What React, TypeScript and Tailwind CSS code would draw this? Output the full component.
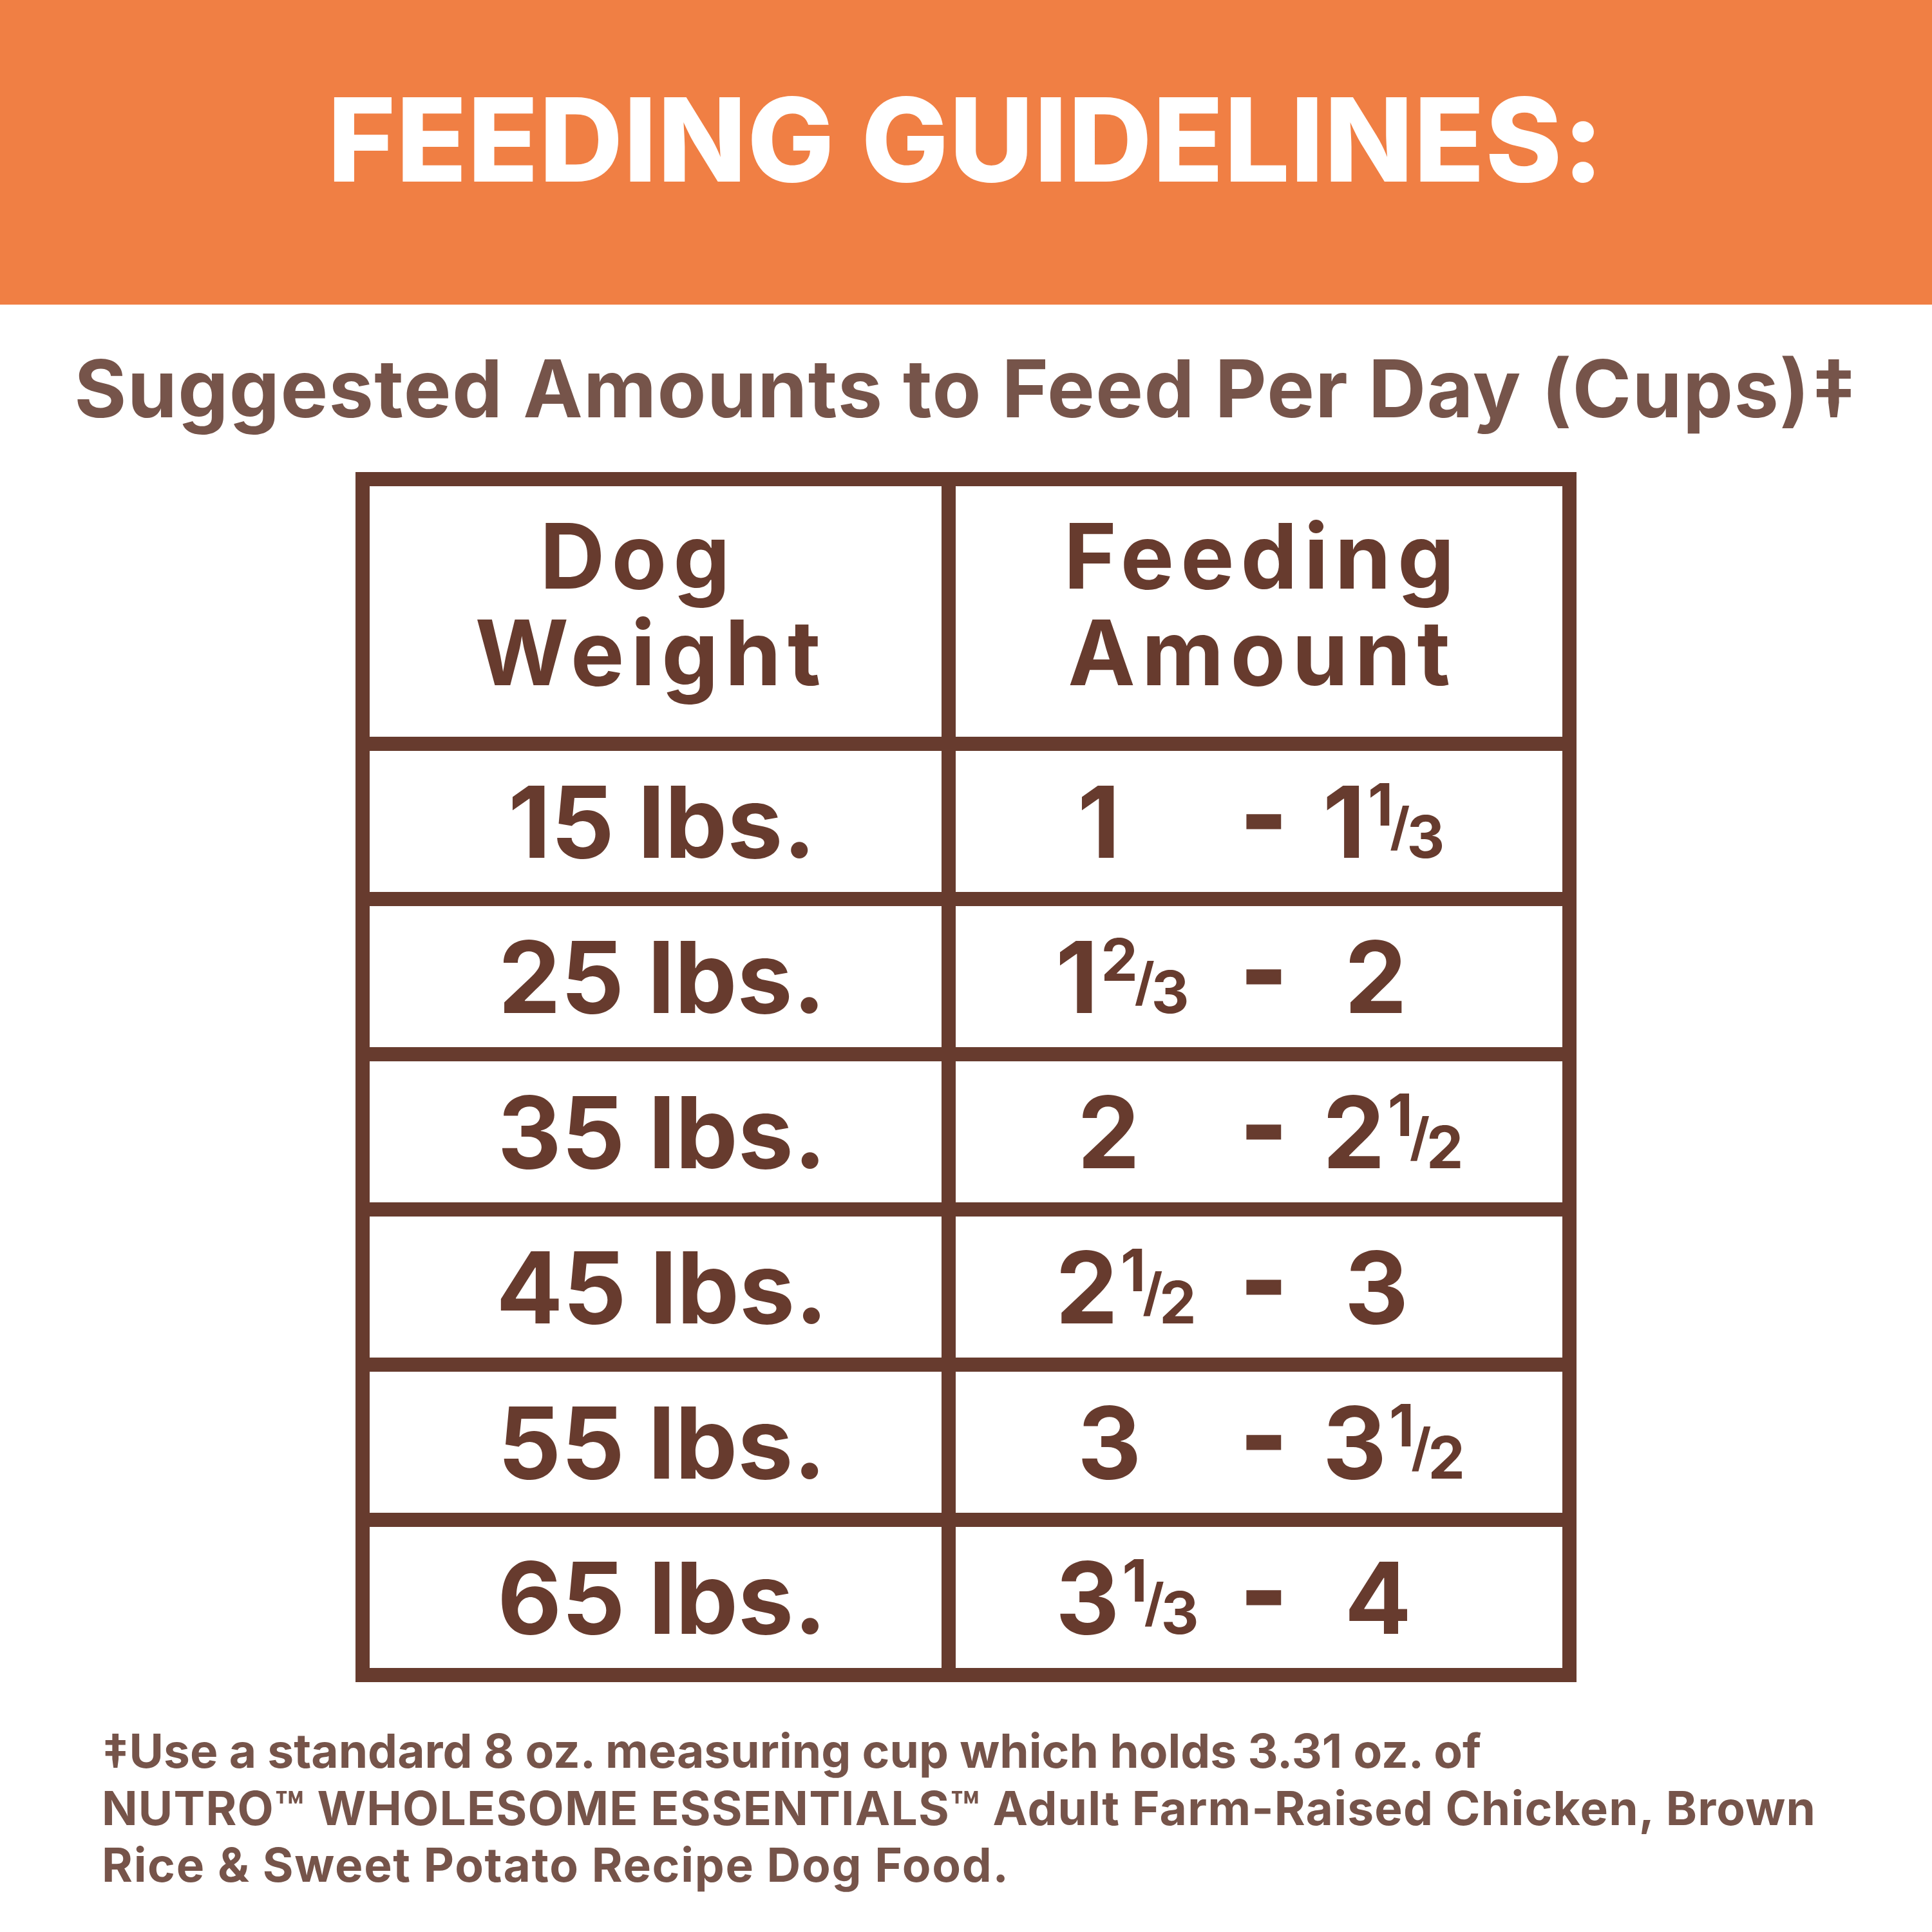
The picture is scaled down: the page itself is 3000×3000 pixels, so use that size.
import React from 'react';

type Amount = { whole: string; num?: string; den?: string };

const rows: { weight: string; from: Amount; to: Amount }[] = [
  { weight: '15 lbs.', from: { whole: '1' }, to: { whole: '1', num: '1', den: '3' } },
  { weight: '25 lbs.', from: { whole: '1', num: '2', den: '3' }, to: { whole: '2' } },
  { weight: '35 lbs.', from: { whole: '2' }, to: { whole: '2', num: '1', den: '2' } },
  { weight: '45 lbs.', from: { whole: '2', num: '1', den: '2' }, to: { whole: '3' } },
  { weight: '55 lbs.', from: { whole: '3' }, to: { whole: '3', num: '1', den: '2' } },
  { weight: '65 lbs.', from: { whole: '3', num: '1', den: '3' }, to: { whole: '4' } },
];

// whole number with a stacked-ish fraction (numerator raised, slash, denominator on baseline)
const Value = ({ amount }: { amount: Amount }) => {
  if (!amount.num) {
    return <span className="pl-[34px]">{amount.whole}</span>;
  }
  return (
    <span className="whitespace-nowrap">
      {amount.whole}
      <span className="text-[91px] leading-none ml-[4px] [vertical-align:50px]">{amount.num}</span>
      <span className="text-[80px] leading-none -mx-[5px] [vertical-align:20px]">/</span>
      <span className="text-[91px] leading-none">{amount.den}</span>
    </span>
  );
};

const App = () => {
  return (
    <div className="w-[3000px] h-[3000px] bg-white font-['Inter','Noto_Sans',sans-serif] overflow-hidden">
      <div className="h-[473px] bg-[#f07f44] flex justify-center pt-[127px]">
        <h1 className="text-[180px] leading-[180px] font-extrabold tracking-[1.2px] text-white">FEEDING GUIDELINES:</h1>
      </div>

      <p className="mt-[68px] text-center text-[124px] leading-[124px] font-bold tracking-[1.3px] text-[#76544a]">
        Suggested Amounts to Feed Per Day (Cups)‡
      </p>

      <div className="mt-[68px] mx-auto w-[1896px] bg-[#673b2e] p-[22px] grid grid-cols-[888px_942px] gap-[22px] text-[#673b2e] font-bold">
        <div className="bg-white h-[389px] flex flex-col items-center pt-[33px] text-[140px] leading-[150px] tracking-[10px] pr-[14px]">
          <span className="mr-[40px]">Dog</span>
          <span>Weight</span>
        </div>
        <div className="bg-white h-[389px] flex flex-col items-center pt-[33px] text-[140px] leading-[150px] tracking-[10px] pl-[10px]">
          <span>Feeding</span>
          <span>Amount</span>
        </div>

        {rows.map((row) => (
          <React.Fragment key={row.weight}>
            <div className="bg-white h-[219px] flex items-center justify-center text-[154px] leading-[154px] pl-[20px]">
              {row.weight}
            </div>
            <div className="bg-white h-[219px] flex items-center pl-[155px] text-[154px] leading-[154px]">
              <div className="w-[216px]">
                <Value amount={row.from} />
              </div>
              <span className="ml-[72px] inline-block text-[150px] leading-[60px] -translate-y-[10px] font-extrabold [-webkit-text-stroke:3.5px_#673b2e]">-</span>
              <div className="ml-[56px] w-[216px]">
                <Value amount={row.to} />
              </div>
            </div>
          </React.Fragment>
        ))}
      </div>

      <p className="mt-[63px] pl-[158px] text-[73px] leading-[88.5px] font-bold text-[#76544a]">
        <span>‡Use a standard 8 oz. measuring cup which holds 3.31 oz. of</span>
        <br />
        <span className="tracking-[1.2px]">NUTRO™ WHOLESOME ESSENTIALS™ Adult Farm-Raised Chicken, Brown</span>
        <br />
        <span className="tracking-[1.7px]">Rice &amp; Sweet Potato Recipe Dog Food.</span>
      </p>
    </div>
  );
};

export default App;
